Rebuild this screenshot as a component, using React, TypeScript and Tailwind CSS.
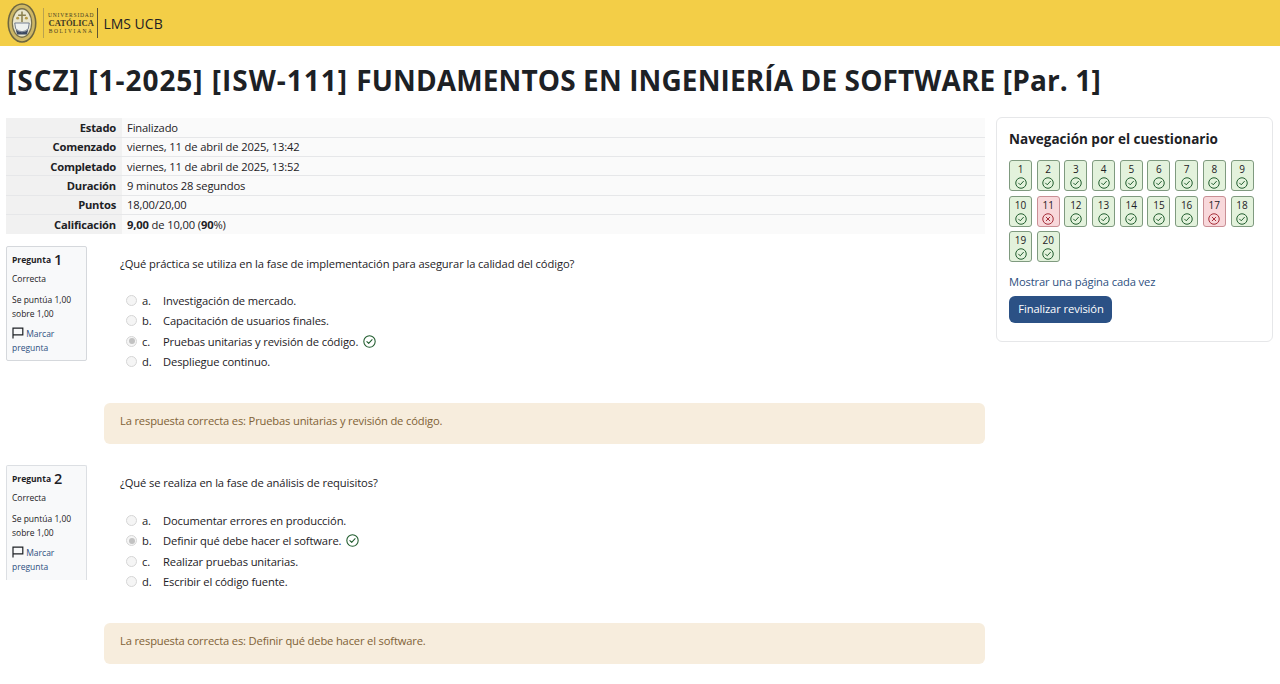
// App.tsx
import * as React from "react";

type Option = { letter: string; text: string; picked?: boolean };
type Question = { n: number; text: string; options: Option[]; answer: string; cut?: boolean };

const summary: { label: string; value: React.ReactNode }[] = [
    { label: "Estado", value: "Finalizado" },
    { label: "Comenzado", value: "viernes, 11 de abril de 2025, 13:42" },
    { label: "Completado", value: "viernes, 11 de abril de 2025, 13:52" },
    { label: "Duración", value: "9 minutos 28 segundos" },
    { label: "Puntos", value: "18,00/20,00" },
    {
        label: "Calificación",
        value: (
            <>
                <b className="font-bold">9,00</b> de 10,00 (<b className="font-bold">90</b>%)
            </>
        ),
    },
];

const questions: Question[] = [
    {
        n: 1,
        text: "¿Qué práctica se utiliza en la fase de implementación para asegurar la calidad del código?",
        options: [
            { letter: "a.", text: "Investigación de mercado." },
            { letter: "b.", text: "Capacitación de usuarios finales." },
            { letter: "c.", text: "Pruebas unitarias y revisión de código.", picked: true },
            { letter: "d.", text: "Despliegue continuo." },
        ],
        answer: "La respuesta correcta es: Pruebas unitarias y revisión de código.",
    },
    {
        n: 2,
        text: "¿Qué se realiza en la fase de análisis de requisitos?",
        options: [
            { letter: "a.", text: "Documentar errores en producción." },
            { letter: "b.", text: "Definir qué debe hacer el software.", picked: true },
            { letter: "c.", text: "Realizar pruebas unitarias." },
            { letter: "d.", text: "Escribir el código fuente." },
        ],
        answer: "La respuesta correcta es: Definir qué debe hacer el software.",
        cut: true,
    },
];

const wrong = [11, 17];

function CheckIcon({ size = 13, color = "#1f5b2c" }: { size?: number; color?: string }) {
    return (
        <svg width={size} height={size} viewBox="0 0 16 16" fill="none" stroke={color} strokeWidth="1.300">
            <circle cx="8" cy="8" r="7" />
            <path d="M4.800 8.200l2.200 2.200 4.200-4.600" strokeLinecap="round" strokeLinejoin="round" />
        </svg>
    );
}

function CrossIcon({ size = 13, color = "#a32a35" }: { size?: number; color?: string }) {
    return (
        <svg width={size} height={size} viewBox="0 0 16 16" fill="none" stroke={color} strokeWidth="1.300">
            <circle cx="8" cy="8" r="7" />
            <path d="M5.600 5.600l4.800 4.800M10.400 5.600l-4.800 4.800" strokeLinecap="round" />
        </svg>
    );
}

function Seal() {
    return (
        <svg width="30" height="42" viewBox="0 0 31 42" className="shrink-0">
            <ellipse cx="15.500" cy="21" rx="15" ry="20.500" fill="#6d6640" />
            <ellipse cx="15.500" cy="21" rx="13.400" ry="18.800" fill="#cdb765" />
            <ellipse cx="15.500" cy="21" rx="10.600" ry="15.400" fill="#77704a" />
            <ellipse cx="15.500" cy="21" rx="9.400" ry="14" fill="#e9e6ce" />
            <path d="M15.500 9v11M11.500 13h8" stroke="#8a8050" strokeWidth="1.600" />
            <path d="M8 21h15l-1 6q-6.500 6-13 0z" fill="#eef1ee" stroke="#54617a" strokeWidth="0.800" />
            <path d="M9 28q6.500 5 13 0l-1.500 5h-10z" fill="#3d4a63" />
            <circle cx="11" cy="16" r="1.500" fill="#b59a47" />
            <circle cx="20" cy="16" r="1.500" fill="#b59a47" />
        </svg>
    );
}

function Radio({ on }: { on?: boolean }) {
    return (
        <span className="flex h-[11px] w-[11px] shrink-0 items-center justify-center rounded-full border border-[#d6d6d6] bg-[#f5f5f5]">
            {on ? <span className="h-[6px] w-[6px] rounded-full bg-[#c2c2c2]" /> : null}
        </span>
    );
}

function FlagIcon() {
    return (
        <svg width="12" height="12" viewBox="0 0 12 12" fill="none" stroke="#1d2125" strokeWidth="1.200" className="inline-block align-[-2px]">
            <path d="M1 11.500V1.200h9.800v6.600H1" />
        </svg>
    );
}

function QuestionBlock({ q }: { q: Question }) {
    return (
        <section className="flex items-start">
            <div
                className={
                    q.cut
                        ? "h-[115px] w-[81px] shrink-0 overflow-hidden rounded-t-[2px] border border-b-0 border-[#dcdfe3] bg-[#f8f9fa] px-[5px] pt-[4px] text-[8.500px] leading-[14px] text-[#1d2125]"
                        : "h-[115px] w-[81px] shrink-0 rounded-[2px] border border-[#d5d8dc] bg-[#f8f9fa] px-[5px] pt-[4px] text-[8.500px] leading-[14px] text-[#1d2125]"
                }
            >
                <div className="flex h-[18px] items-center gap-[3px] font-bold">
                    <span>Pregunta</span>
                    <span className="text-[14.500px] leading-none font-semibold">{q.n}</span>
                </div>
                <div className="mt-[3px]">Correcta</div>
                <div className="mt-[7px]">
                    Se puntúa 1,00
                    <br />
                    sobre 1,00
                </div>
                <div className="mt-[6px]">
                    <FlagIcon /> <span className="text-[#2d4f80]">Marcar pregunta</span>
                </div>
            </div>
            <div className="ml-[17px] flex-1">
                <div
                    className={
                        q.cut
                            ? "h-[158px] pt-[10px] pl-4 text-[11.200px] leading-[15px] text-[#1d2125]"
                            : "h-[157px] pt-[10px] pl-4 text-[11.200px] leading-[15px] text-[#1d2125]"
                    }
                >
                    <p className="tracking-[-0.11px]">{q.text}</p>
                    <div className={q.cut ? "mt-[23px] flex flex-col gap-[5.500px]" : "mt-[22px] flex flex-col gap-[5.500px]"}>
                        {q.options.map((o) => (
                            <div key={o.letter} className="flex h-[15px] items-center tracking-[-0.13px]">
                                <span className="ml-[6px] flex w-[16px]">
                                    <Radio on={o.picked} />
                                </span>
                                <span className="w-[21px]">{o.letter}</span>
                                <span>{o.text}</span>
                                {o.picked ? (
                                    <span className="ml-[5px]">
                                        <CheckIcon />
                                    </span>
                                ) : null}
                            </div>
                        ))}
                    </div>
                </div>
                <div className="flex h-[41px] items-center rounded-[6px] bg-[#f7eddd] pb-[4px] pl-4 text-[11.200px] tracking-[-0.17px] text-[#7f6236]">
                    {q.answer}
                </div>
            </div>
        </section>
    );
}

function NavCard() {
    return (
        <aside className="h-[225px] w-[277px] shrink-0 rounded-[6px] border border-[#e6e7e9] px-3 pt-[11px]">
            <h2 className="text-[13.500px] leading-[20px] font-bold text-[#1d2125]">Navegación por el cuestionario</h2>
            <div className="mt-[11px] grid w-[250px] grid-cols-[repeat(9,23px)] gap-x-[4.700px] gap-y-[4.500px]">
                {Array.from({ length: 20 }, (_, i) => i + 1).map((n) => {
                    const bad = wrong.includes(n);
                    return (
                        <div
                            key={n}
                            className={
                                bad
                                    ? "flex h-[31px] flex-col items-center rounded-[3px] border border-[#c98f95] bg-[#f8d8db] text-[10px] leading-[16px] text-[#1d2125]"
                                    : "flex h-[31px] flex-col items-center rounded-[3px] border border-[#7f9a7f] bg-[#e3f2dc] text-[10px] leading-[16px] text-[#1d2125]"
                            }
                        >
                            <span>{n}</span>
                            {bad ? <CrossIcon size={12} /> : <CheckIcon size={12} />}
                        </div>
                    );
                })}
            </div>
            <div className="mt-[12px] text-[11.200px] leading-[15px] tracking-[-0.13px] text-[#2d4f80]">Mostrar una página cada vez</div>
            <button className="mt-[7px] h-[27px] w-[103px] rounded-[6px] bg-[#2b5185] pl-px text-[11.200px] tracking-[-0.1px] text-white">
                Finalizar revisión
            </button>
        </aside>
    );
}

export default function App() {
    return (
        <div className="h-[684px] overflow-hidden bg-white font-['Open_Sans','Noto_Sans',sans-serif]">
            <header className="flex h-[46px] items-center bg-[#f3ce47] pl-[7px]">
                <Seal />
                <div className="ml-[6px] h-[30px] border-l border-[#b9a24f]" />
                <div className="ml-[4px] flex flex-col items-center font-['Liberation_Serif',serif] text-[#3f3a26]">
                    <span className="text-[5.500px] leading-[7px] tracking-[0.8px]">UNIVERSIDAD</span>
                    <span className="text-[8.500px] leading-[9px] font-bold">CATÓLICA</span>
                    <span className="text-[5.500px] leading-[7px] tracking-[1.6px]">BOLIVIANA</span>
                </div>
                <div className="ml-[3px] h-[30px] border-l border-[#5f5532]" />
                <span className="ml-[5px] text-[14px] text-[#1d2125]">LMS UCB</span>
            </header>

            <h1 className="mt-[16px] pl-[7px] text-[28px] leading-[36px] font-bold tracking-[0.12px] whitespace-nowrap text-[#1d2125]">
                <span className="tracking-[0.98px]">[SCZ] [1-2025] [ISW-111] </span>
                FUNDAMENTOS EN INGENIERÍA DE SOFTWARE [Par. 1]
            </h1>

            <div className="mt-[19px] flex gap-[11px] pl-[6px]">
                <main className="w-[979px] shrink-0 pt-px">
                    <table className="w-full border-collapse text-[11.200px] leading-[15px] tracking-[-0.14px] text-[#1d2125]">
                        <tbody>
                            {summary.map((row) => (
                                <tr key={row.label} className="h-[19.300px] border-b border-[#e6e7e9] last:border-b-0">
                                    <th className="w-[116px] bg-[#f1f1f1] pr-[6px] text-right font-bold tracking-[-0.2px]">{row.label}</th>
                                    <td className="bg-[#fafafa] pl-[5px]">{row.value}</td>
                                </tr>
                            ))}
                        </tbody>
                    </table>
                    <div className="mt-[12px] flex flex-col gap-[21px]">
                        {questions.map((q) => (
                            <QuestionBlock key={q.n} q={q} />
                        ))}
                    </div>
                </main>
                <NavCard />
            </div>
        </div>
    );
}
